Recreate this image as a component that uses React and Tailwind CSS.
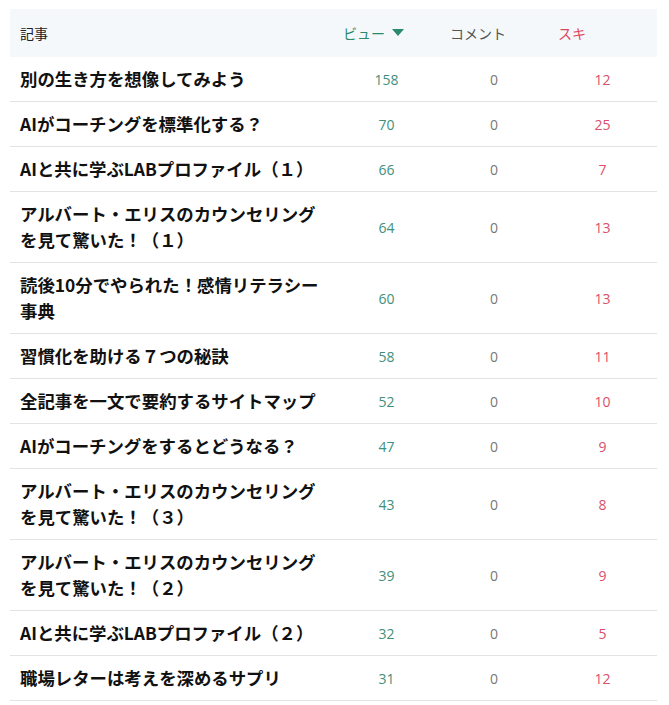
import React from "react";

const rows = [
  { title: "別の生き方を想像してみよう", views: 158, comments: 0, likes: 12 },
  { title: "AIがコーチングを標準化する？", views: 70, comments: 0, likes: 25 },
  { title: "AIと共に学ぶLABプロファイル（１）", views: 66, comments: 0, likes: 7 },
  { title: "アルバート・エリスのカウンセリングを見て驚いた！（１）", views: 64, comments: 0, likes: 13 },
  { title: "読後10分でやられた！感情リテラシー事典", views: 60, comments: 0, likes: 13 },
  { title: "習慣化を助ける７つの秘訣", views: 58, comments: 0, likes: 11 },
  { title: "全記事を一文で要約するサイトマップ", views: 52, comments: 0, likes: 10 },
  { title: "AIがコーチングをするとどうなる？", views: 47, comments: 0, likes: 9 },
  { title: "アルバート・エリスのカウンセリングを見て驚いた！（３）", views: 43, comments: 0, likes: 8 },
  { title: "アルバート・エリスのカウンセリングを見て驚いた！（２）", views: 39, comments: 0, likes: 9 },
  { title: "AIと共に学ぶLABプロファイル（２）", views: 32, comments: 0, likes: 5 },
  { title: "職場レターは考えを深めるサプリ", views: 31, comments: 0, likes: 12 },
];

const font = { fontFamily: '"Noto Sans CJK JP", "Noto Sans", sans-serif' };
const numFont = { fontFamily: '"Open Sans", sans-serif' };

const App = () => {
  return (
    <div className="bg-white min-h-[705px] pt-[9px] px-[10px]" style={font}>
      <div className="w-[647px]">
        <div className="grid grid-cols-[323px_107px_108px_109px] h-[48px] items-center bg-[#f5f8fa] text-[14px]">
          <div className="pl-[10px] text-[#222]">記事</div>
          <div className="pl-[10px] text-[#2a8a6c] flex items-center gap-[7px]">
            ビュー
            <svg width="12" height="8" viewBox="0 0 12 8">
              <path d="M0 0 L12 0 L6 7 Z" fill="#2a8a6c" />
            </svg>
          </div>
          <div className="pl-[10px] text-[#555]">コメント</div>
          <div className="pl-[10px] text-[#e0455d]">スキ</div>
        </div>
        {rows.map((item, index) => (
          <div
            key={index}
            className="grid grid-cols-[323px_107px_108px_109px] items-center border-b border-[#e3e3e3] py-[9px]"
          >
            <div className="px-[10px] text-[17.4px] font-bold leading-[26px] text-[#111]">
              {item.title}
            </div>
            <div className="text-center text-[14px] text-[#3f8f7c]" style={numFont}>
              {item.views}
            </div>
            <div className="text-center text-[14px] text-[#777]" style={numFont}>
              {item.comments}
            </div>
            <div className="text-center text-[14px] text-[#d9506b]" style={numFont}>
              {item.likes}
            </div>
          </div>
        ))}
      </div>
    </div>
  );
};

export default App;
